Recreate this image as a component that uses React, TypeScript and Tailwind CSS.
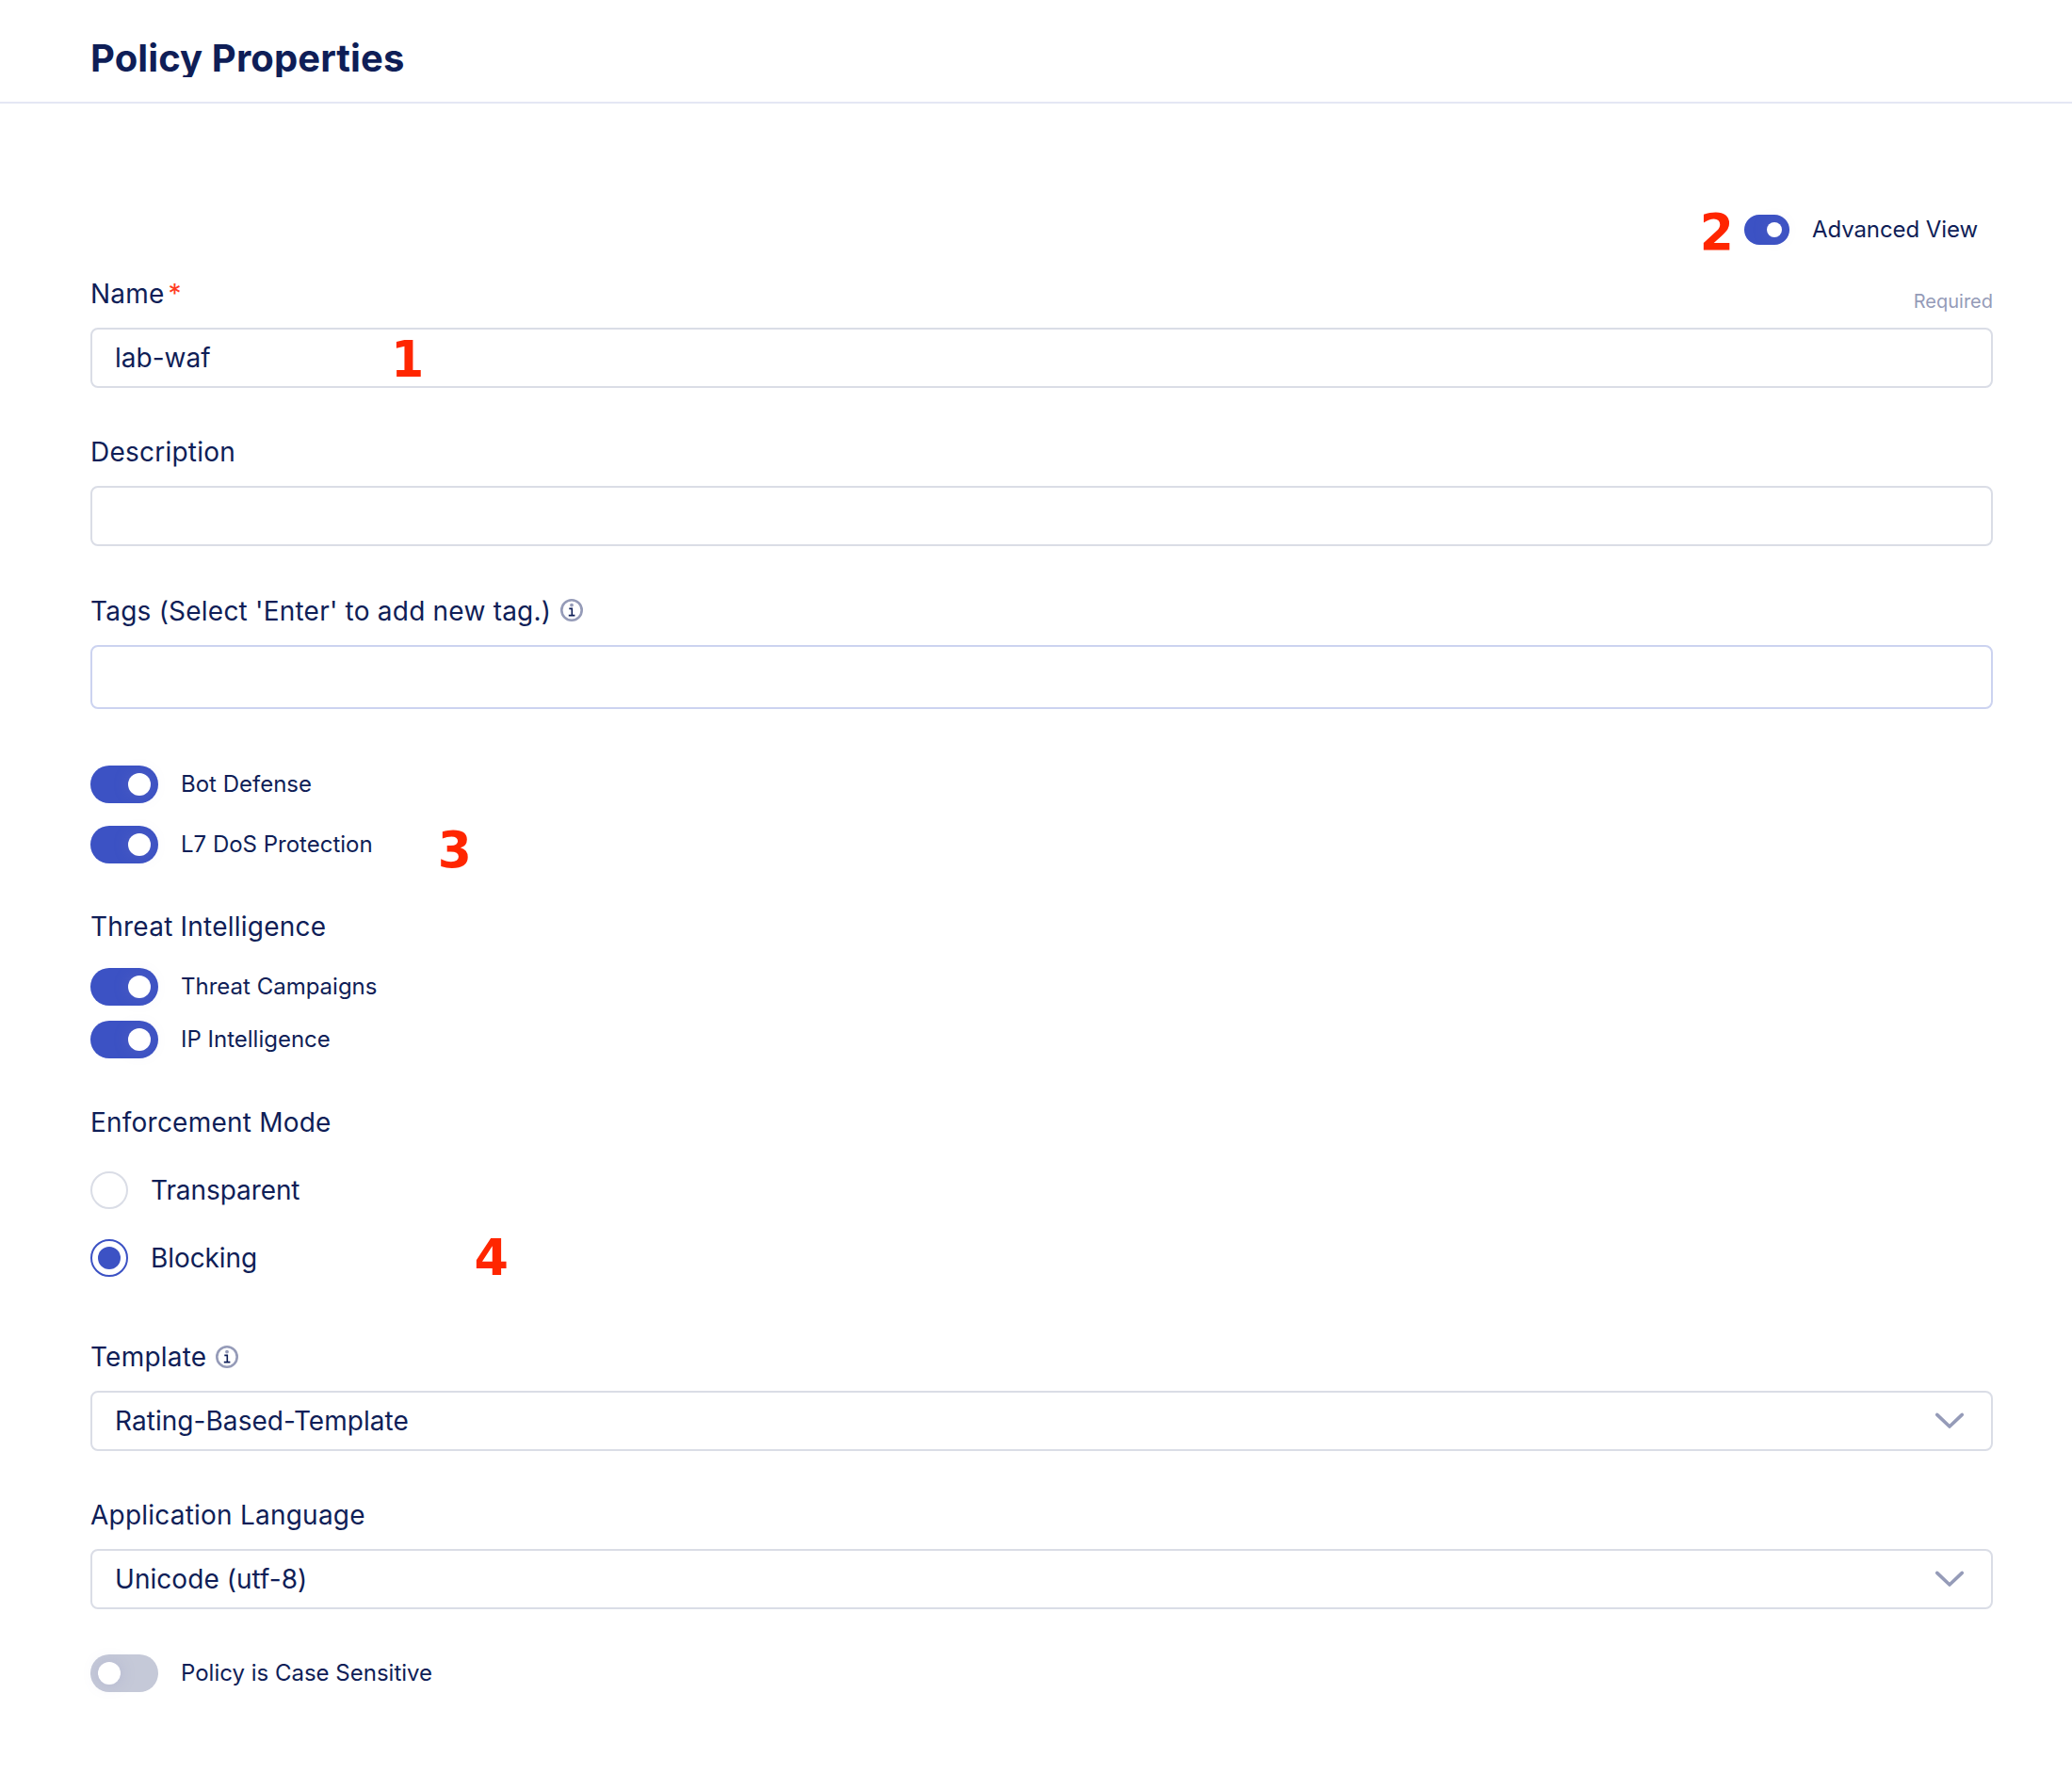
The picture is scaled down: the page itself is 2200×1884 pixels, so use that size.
import React from "react";

function Toggle({ label, on = true, small = false }: { label: string; on?: boolean; small?: boolean }) {
  return (
    <label className={small ? "flex h-8 items-center gap-6" : "flex h-10 items-center gap-6"}>
      <span
        role="switch"
        aria-checked={on}
        className={[
          "flex shrink-0 items-center rounded-full p-2",
          small ? "h-8 w-12" : "h-10 w-[72px]",
          on ? "justify-end bg-[#3c52c4]" : "justify-start bg-[#c5c9d8]",
        ].join(" ")}
      >
        <span
          className={[
            "rounded-full bg-white shadow-[0_0_16px_rgba(130,130,190,0.25)]",
            small ? "size-4" : "size-6",
          ].join(" ")}
        />
      </span>
      <span className={small ? "text-2xl leading-8 tracking-[-0.08px]" : "text-2xl leading-8"}>{label}</span>
    </label>
  );
}

function Label({ children, className = "" }: { children: React.ReactNode; className?: string }) {
  return (
    <div className={`flex h-10 items-center text-[28px] leading-10 tracking-[0.22px] ${className}`}>{children}</div>
  );
}

function InfoIcon({ className = "" }: { className?: string }) {
  return (
    <svg viewBox="0 0 24 24" className={`ml-2.5 size-6 shrink-0 ${className}`} fill="none">
      <circle cx="12" cy="12" r="10.7" stroke="#959bb8" strokeWidth="2.6" />
      <circle cx="12" cy="6.6" r="1.9" fill="#959bb8" />
      <path d="M9.3 10.4h3v7.2M8.8 17.6h6.6" stroke="#0f1e57" strokeWidth="1.6" />
    </svg>
  );
}

function Chevron() {
  return (
    <svg viewBox="0 0 32 20" className="h-5 w-8 shrink-0" fill="none">
      <path
        d="M2.7 3.4 16 16 29.3 3.4"
        stroke="#959bb8"
        strokeWidth="3.6"
        strokeLinecap="round"
        strokeLinejoin="round"
      />
    </svg>
  );
}

function Select({ value }: { value: string }) {
  return (
    <div className="mt-4 flex h-16 items-center justify-between rounded-lg border-2 border-[#dadde6] pr-7 pl-6 text-[28px] tracking-[0.05px]">
      <span>{value}</span>
      <Chevron />
    </div>
  );
}

function Radio({ label, checked = false }: { label: string; checked?: boolean }) {
  return (
    <label className="flex h-10 items-center gap-6">
      <span
        className={[
          "flex size-10 shrink-0 items-center justify-center rounded-full border-2",
          checked ? "border-[#3c52c4]" : "border-[#dadde6]",
        ].join(" ")}
      >
        {checked && <span className="size-6 rounded-full bg-[#3c52c4]" />}
      </span>
      <span className="text-[28px] leading-10 tracking-[-0.08px]">{label}</span>
    </label>
  );
}

function Marker({ n, className }: { n: number; className: string }) {
  return (
    <span
      className={`absolute font-['DejaVu_Sans',sans-serif] text-[54px] leading-none font-bold text-[#ff2600] ${className}`}
    >
      {n}
    </span>
  );
}

export default function App() {
  return (
    <div className="min-h-[1884px] w-full bg-white font-['Inter',sans-serif] text-[#0f1e57]">
      <header className="h-[110px] border-b-2 border-[#e4e7f4] pt-[42px] pl-24">
        <h1 className="h-10 overflow-hidden text-[40px] leading-10 font-bold tracking-[0.1px]">Policy Properties</h1>
      </header>

      <main className="pt-[118px] pr-[84px] pl-24">
        <div className="flex justify-end pr-4">
          <div className="relative">
            <Marker n={2} className="-top-2 left-[-48px] scale-x-[0.96]" />
            <Toggle label="Advanced View" small />
          </div>
        </div>

        <div className="mt-8 flex h-10 justify-between">
          <Label>
            Name<span className="ml-1 text-[#ff3b1f]">*</span>
          </Label>
          <span className="mt-2 text-xl leading-10 text-[#959bb8]">Required</span>
        </div>
        <div className="relative mt-4 flex h-16 items-center rounded-lg border-2 border-[#dadde6] px-6 text-[28px]">
          lab-waf
          <Marker n={1} className="top-[5px] left-[316px] scale-x-[0.93]" />
        </div>

        <Label className="mt-12">Description</Label>
        <div className="mt-4 h-16 rounded-lg border-2 border-[#dadde6]" />

        <Label className="mt-[49px]">
          Tags (Select 'Enter' to add new tag.)
          <InfoIcon className="mb-0.5" />
        </Label>
        <div className="mt-4 h-[68px] rounded-lg border-2 border-[#ccd3f0]" />

        <div className="relative mt-[60px] flex flex-col gap-6">
          <Toggle label="Bot Defense" />
          <Toggle label="L7 DoS Protection" />
          <Marker n={3} className="top-[63px] left-[368px] scale-x-[0.96]" />
        </div>

        <Label className="mt-[47px]">Threat Intelligence</Label>
        <div className="mt-6 flex flex-col gap-4">
          <Toggle label="Threat Campaigns" />
          <Toggle label="IP Intelligence" />
        </div>

        <Label className="mt-12">Enforcement Mode</Label>
        <div className="relative mt-8 flex flex-col gap-8">
          <Radio label="Transparent" />
          <Radio label="Blocking" checked />
          <Marker n={4} className="top-[65px] left-[407px] scale-x-[0.97]" />
        </div>

        <Label className="mt-[65px]">
          Template
          <InfoIcon />
        </Label>
        <Select value="Rating-Based-Template" />

        <Label className="mt-12">Application Language</Label>
        <Select value="Unicode (utf-8)" />

        <div className="mt-12">
          <Toggle label="Policy is Case Sensitive" on={false} />
        </div>
      </main>
    </div>
  );
}
